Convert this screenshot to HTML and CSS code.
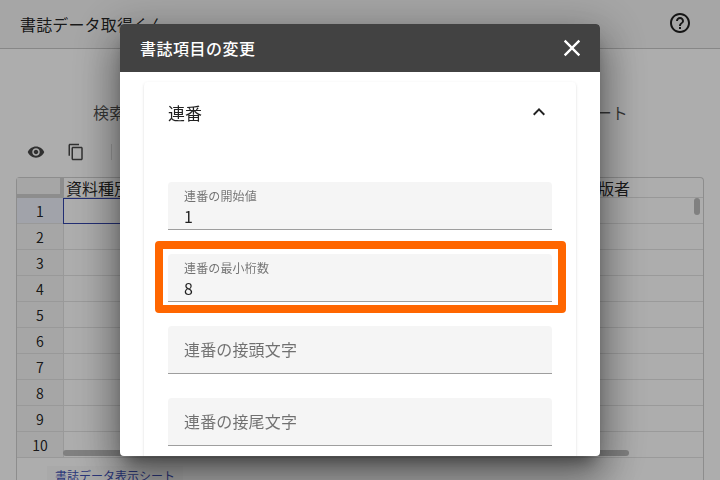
FILE: index.html
```html
<!DOCTYPE html>
<html lang="ja">
<head>
<meta charset="utf-8">
<title>書誌データ取得くん</title>
<link rel="stylesheet" href="styles.css">
</head>
<body>
<div class="app">
  <header class="app-header">
    <span class="app-title">書誌データ取得くん</span>
    <svg class="help" viewBox="0 0 24 24"><path d="M11 18h2v-2h-2v2zm1-16C6.48 2 2 6.48 2 12s4.48 10 10 10 10-4.48 10-10S17.52 2 12 2zm0 18c-4.41 0-8-3.59-8-8s3.59-8 8-8 8 3.59 8 8-3.59 8-8 8zm0-14c-2.21 0-4 1.79-4 4h2c0-1.1.9-2 2-2s2 .9 2 2c0 2-3 1.75-3 5h2c0-2.25 3-2.5 3-5 0-2.21-1.79-4-4-4z"/></svg>
  </header>
  <nav class="tabs">
    <span>検索条件</span>
    <span>書誌データ表示シート</span>
  </nav>
  <div class="toolbar">
    <svg class="tool" viewBox="0 0 24 24"><path d="M12 4.5C7 4.5 2.73 7.61 1 12c1.73 4.39 6 7.5 11 7.5s9.27-3.11 11-7.5c-1.73-4.39-6-7.5-11-7.5zM12 17c-2.76 0-5-2.24-5-5s2.24-5 5-5 5 2.24 5 5-2.24 5-5 5zm0-8c-1.66 0-3 1.34-3 3s1.34 3 3 3 3-1.34 3-3-1.34-3-3-3z"/></svg>
    <svg class="tool" viewBox="0 0 24 24"><path d="M16 1H4c-1.1 0-2 .9-2 2v14h2V3h12V1zm3 4H8c-1.1 0-2 .9-2 2v14c0 1.1.9 2 2 2h11c1.1 0 2-.9 2-2V7c0-1.1-.9-2-2-2zm0 16H8V7h11v14z"/></svg>
    <span class="tool-divider"></span>
  </div>
  <section class="sheet">
    <div class="sheet-grid">
      <div class="row head-row">
        <div class="corner"></div>
        <div class="col-name">資料種別</div>
        <div class="col-name col-last">出版者</div>
      </div>
      <div class="row"><div class="row-num selected">1</div><div class="cell"><span class="active"></span></div></div>
      <div class="row"><div class="row-num">2</div><div class="cell"></div></div>
      <div class="row"><div class="row-num">3</div><div class="cell"></div></div>
      <div class="row"><div class="row-num">4</div><div class="cell"></div></div>
      <div class="row"><div class="row-num">5</div><div class="cell"></div></div>
      <div class="row"><div class="row-num">6</div><div class="cell"></div></div>
      <div class="row"><div class="row-num">7</div><div class="cell"></div></div>
      <div class="row"><div class="row-num">8</div><div class="cell"></div></div>
      <div class="row"><div class="row-num">9</div><div class="cell"></div></div>
      <div class="row"><div class="row-num">10</div><div class="cell"></div></div>
      <span class="thumb-v"></span>
      <span class="thumb-h"></span>
    </div>
    <div class="sheet-tabs"><span class="sheet-tab">書誌データ表示シート</span></div>
  </section>
</div>

<div class="backdrop"></div>
<div class="dialog">
  <div class="dialog-title">
    <span>書誌項目の変更</span>
    <svg class="close" viewBox="0 0 24 24"><path d="M19 6.41L17.59 5 12 10.59 6.41 5 5 6.41 10.59 12 5 17.59 6.41 19 12 13.41 17.59 19 19 17.59 13.41 12 19 6.41z"/></svg>
  </div>
  <div class="dialog-body">
    <div class="panel">
      <div class="panel-head">
        <span>連番</span>
        <svg class="chevron" viewBox="0 0 24 24"><path d="M12 8l-6 6 1.41 1.41L12 10.83l4.59 4.58L18 14z"/></svg>
      </div>
      <div class="fields">
        <div class="field">
          <label class="field-label">連番の開始値</label>
          <div class="field-value">1</div>
        </div>
        <div class="field">
          <label class="field-label">連番の最小桁数</label>
          <div class="field-value">8</div>
          <span class="highlight"></span>
        </div>
        <div class="field field-empty">連番の接頭文字</div>
        <div class="field field-empty">連番の接尾文字</div>
      </div>
    </div>
  </div>
</div>
</body>
</html>
```
FILE: styles.css
```css
* { box-sizing: border-box; }
html, body {
  margin: 0;
  height: 480px;
  overflow: hidden;
  background: #fff;
  font-family: "Noto Sans CJK JP", "Noto Sans", sans-serif;
  color: rgba(0, 0, 0, .87);
}
.app { height: 480px; display: flex; flex-direction: column; }
.app-header {
  height: 49px;
  flex: none;
  display: flex;
  align-items: center;
  justify-content: space-between;
  padding: 0 28px 0 20px;
  background: #f5f5f5;
  border-bottom: 1px solid #c8c8c8;
  font-size: 16px;
  letter-spacing: .15px;
}
.help { width: 24px; height: 24px; margin-bottom: 2px; fill: currentColor; }
.tabs {
  height: 48px;
  margin-top: 39px;
  flex: none;
  display: flex;
  align-items: center;
  justify-content: space-between;
  padding: 0 92px 0 93px;
  font-size: 16px;
  letter-spacing: .15px;
  color: rgba(0, 0, 0, .7);
}
.toolbar {
  height: 32px;
  flex: none;
  display: flex;
  align-items: center;
  gap: 22px;
  padding-left: 27px;
}
.tool { width: 18px; height: 18px; fill: rgba(0, 0, 0, .72); }
.tool-divider { width: 1px; height: 16px; margin-left: 4px; background: #ddd; }
.sheet {
  flex: 1;
  margin: 9px 16px 0;
  border: 1px solid #d0d0d0;
  border-bottom: 0;
  border-radius: 4px 4px 0 0;
  display: flex;
  flex-direction: column;
}
.sheet-grid { position: relative; height: 280px; flex: none; border-bottom: 1px solid #d8d8d8; }
.row { display: flex; height: 26px; }
.head-row { height: 20px; font-size: 16px; line-height: 20px; position: relative; border-bottom: 1px solid #e0e0e0; }
.corner {
  width: 47px;
  flex: none;
  height: 20px;
  background: #f5f5f5;
  border-right: 4px solid #d0d0d0;
  border-bottom: 4px solid #d0d0d0;
}
.col-name { padding-left: 2px; white-space: nowrap; }
.col-last { margin-left: auto; padding-right: 73px; }
.row-num {
  width: 47px;
  flex: none;
  text-align: center;
  font-size: 14px;
  line-height: 26px;
  background: #f5f5f5;
  border-right: 1px solid #e2e2e2;
  border-bottom: 1px solid #e2e2e2;
}
.row-num.selected { background: #eef1fb; }
.cell { flex: 1; border-bottom: 1px solid #e4e4e4; }
.active { display: block; width: 120px; height: 26px; margin-left: -1px; border: 1px solid #3344aa; }
.thumb-v {
  position: absolute;
  right: 3px;
  top: 20px;
  width: 6px;
  height: 17px;
  border-radius: 3px;
  background: #bdbdbd;
}
.thumb-h {
  position: absolute;
  left: 46px;
  width: 566px;
  bottom: 1px;
  height: 6px;
  border-radius: 3px;
  background: #bdbdbd;
}
.sheet-tabs { padding: 4px 0 0 30px; }
.sheet-tab {
  display: inline-block;
  width: 136px;
  height: 24px;
  padding-left: 8px;
  background: #fafafa;
  font-size: 12px;
  line-height: 20px;
  color: #3f51b5;
  white-space: nowrap;
}
.backdrop { position: fixed; inset: 0; background: rgba(0, 0, 0, .32); }
.dialog {
  position: fixed;
  left: 120px;
  top: 24px;
  width: 480px;
  height: 432px;
  background: #fff;
  border-radius: 4px;
  overflow: hidden;
  display: flex;
  flex-direction: column;
  box-shadow: 0 11px 15px -7px rgba(0,0,0,.4), 0 24px 38px 3px rgba(0,0,0,.28), 0 9px 46px 8px rgba(0,0,0,.24);
}
.dialog-title {
  height: 48px;
  flex: none;
  background: #424242;
  color: #fff;
  display: flex;
  align-items: center;
  justify-content: space-between;
  padding: 0 14px 0 20px;
  font-size: 16px;
  font-weight: 500;
  letter-spacing: .5px;
}
.close { width: 28px; height: 28px; fill: #fff; }
.dialog-body { flex: 1; overflow: hidden; padding: 10px 24px 0; }
.panel {
  background: #fff;
  border-radius: 4px 4px 0 0;
  box-shadow: 0 2px 1px -1px rgba(0,0,0,.2), 0 1px 1px 0 rgba(0,0,0,.14), 0 1px 3px 0 rgba(0,0,0,.12);
  height: 500px;
}
.panel-head {
  height: 60px;
  display: flex;
  align-items: center;
  justify-content: space-between;
  padding: 0 24px;
  font-size: 17px;
}
.chevron { width: 24px; height: 24px; margin-right: 1px; fill: rgba(0, 0, 0, .87); }
.fields { display: flex; flex-direction: column; gap: 24px; padding: 40px 24px 0; }
.field {
  position: relative;
  height: 48px;
  padding: 5px 16px 0;
  background: #f5f5f5;
  border-radius: 4px 4px 0 0;
  border-bottom: 1px solid #9e9e9e;
}
.field-label { display: block; font-size: 12px; line-height: 18px; letter-spacing: .15px; color: rgba(0, 0, 0, .54); }
.field-value { font-size: 16px; line-height: 22px; }
.field-empty { font-size: 16px; line-height: 46px; padding-top: 0; letter-spacing: .15px; color: rgba(0, 0, 0, .54); }
.highlight {
  position: absolute;
  left: -13px;
  right: -14px;
  top: -13px;
  bottom: -12px;
  border: 8px solid #ff6600;
  border-radius: 4px;
}
```
